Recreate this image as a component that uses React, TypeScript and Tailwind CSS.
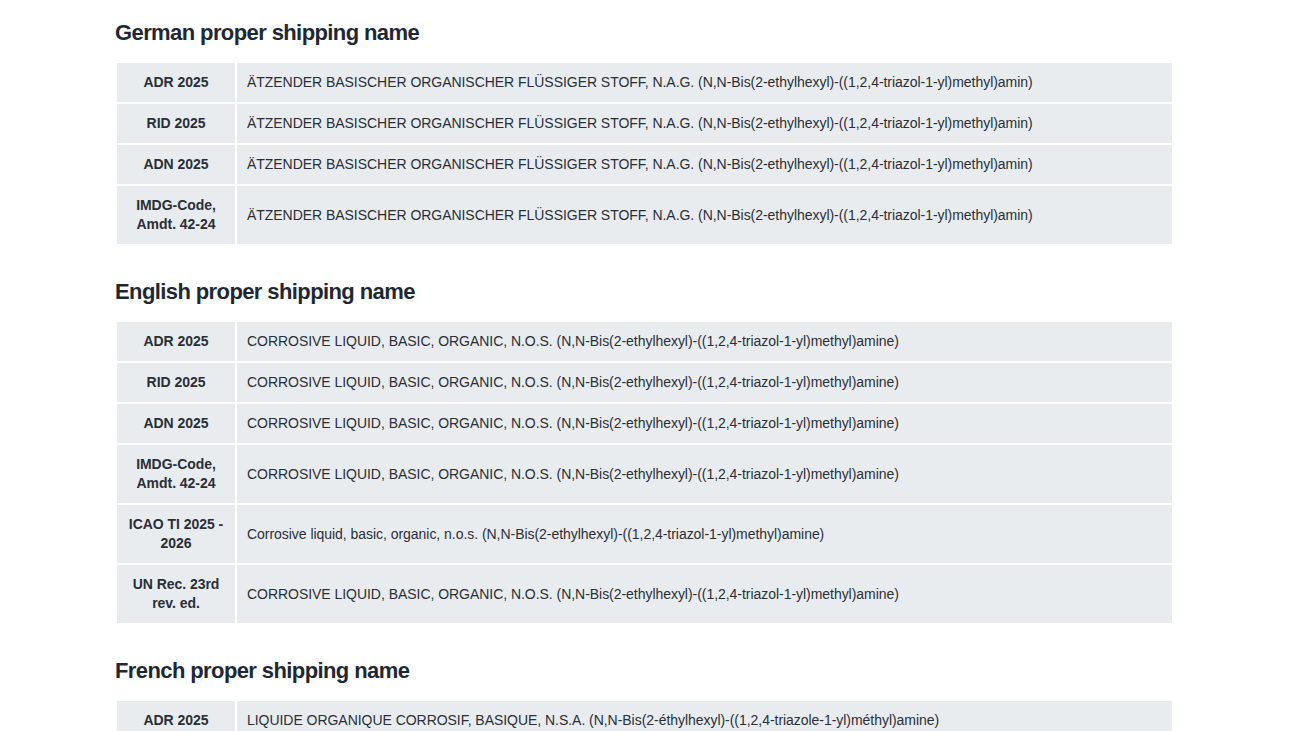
import React from "react";

type Row = { label: string[]; text: string };

const DE = "ÄTZENDER BASISCHER ORGANISCHER FLÜSSIGER STOFF, N.A.G. (N,N-Bis(2-ethylhexyl)-((1,2,4-triazol-1-yl)methyl)amin)";
const EN = "CORROSIVE LIQUID, BASIC, ORGANIC, N.O.S. (N,N-Bis(2-ethylhexyl)-((1,2,4-triazol-1-yl)methyl)amine)";
const FR = "LIQUIDE ORGANIQUE CORROSIF, BASIQUE, N.S.A. (N,N-Bis(2-éthylhexyl)-((1,2,4-triazole-1-yl)méthyl)amine)";

const sections: { title: string; rows: Row[] }[] = [
  {
    title: "German proper shipping name",
    rows: [
      { label: ["ADR 2025"], text: DE },
      { label: ["RID 2025"], text: DE },
      { label: ["ADN 2025"], text: DE },
      { label: ["IMDG-Code,", "Amdt. 42-24"], text: DE },
    ],
  },
  {
    title: "English proper shipping name",
    rows: [
      { label: ["ADR 2025"], text: EN },
      { label: ["RID 2025"], text: EN },
      { label: ["ADN 2025"], text: EN },
      { label: ["IMDG-Code,", "Amdt. 42-24"], text: EN },
      {
        label: ["ICAO TI 2025 -", "2026"],
        text: "Corrosive liquid, basic, organic, n.o.s. (N,N-Bis(2-ethylhexyl)-((1,2,4-triazol-1-yl)methyl)amine)",
      },
      { label: ["UN Rec. 23rd", "rev. ed."], text: EN },
    ],
  },
  {
    title: "French proper shipping name",
    rows: [{ label: ["ADR 2025"], text: FR }],
  },
];

export default function App() {
  return (
    <div
      className="w-[1299px] h-[731px] overflow-hidden bg-white text-[#2a2f37]"
      style={{ fontFamily: '"Liberation Sans", Arial, sans-serif' }}
    >
      <div className="pl-[115px] pt-[19px] w-[1174px]">
        {sections.map((s) => (
          <section key={s.title} className="mb-[32px]">
            <h2 className="text-[22px] leading-[28px] font-bold tracking-[-0.6px] text-[#1e2833] mb-[14px]">
              {s.title}
            </h2>
            <table className="w-full border-separate border-spacing-[2px] text-[14px] leading-[19px] tracking-[-0.04px]">
              <tbody>
                {s.rows.map((r, i) => (
                  <tr key={i}>
                    <td className="w-[118px] bg-[#e8ecef] py-[10px] px-[4px] text-center font-bold align-middle">
                      {r.label.map((l, j) => (
                        <div key={j}>{l}</div>
                      ))}
                    </td>
                    <td className="bg-[#e8ecef] py-[10px] pl-[10px] pr-[10px] align-middle">
                      {r.text}
                    </td>
                  </tr>
                ))}
              </tbody>
            </table>
          </section>
        ))}
      </div>
    </div>
  );
}
